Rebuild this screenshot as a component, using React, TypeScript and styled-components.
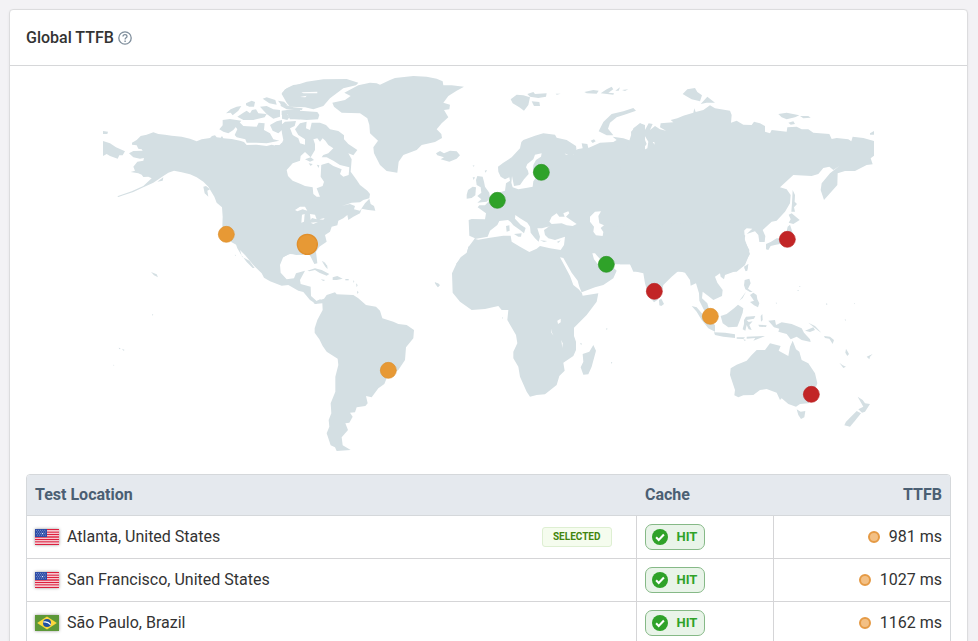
import React from "react";
import styled, { createGlobalStyle } from "styled-components";

const GlobalStyle = createGlobalStyle`
  *, *::before, *::after { box-sizing: border-box; }
  body {
    margin: 0;
    background: #f3f2f5;
    color: #333;
    font-family: Roboto, "Liberation Sans", sans-serif;
    font-size: 16px;
    line-height: 24px;
  }
`;

const Page = styled.main`
  padding: 9px 10px 0 9px;
`;

const Card = styled.section`
  background: #fff;
  border: 1px solid #dcdcde;
  border-radius: 4px;
  box-shadow: 0 1px 3px rgba(0, 0, 0, 0.06);
`;

const CardHeader = styled.header`
  display: flex;
  align-items: center;
  gap: 4px;
  padding: 16px 16px 15px;
  border-bottom: 1px solid #d6d7d9;
`;

const Title = styled.h2`
  margin: 0;
  font-size: 16px;
  font-weight: 500;
`;

const HelpButton = styled.button`
  display: flex;
  padding: 0;
  border: 0;
  background: none;
  color: #7f8e9c;
`;

const CardBody = styled.div`
  padding: 0 16px;
`;

const MapSvg = styled.svg`
  display: block;
  width: 100%;
  height: auto;
  margin-bottom: 8px;
`;

const Frame = styled.div`
  border: 1px solid #d5d8db;
  border-radius: 4px;
  overflow: hidden;
`;

const Table = styled.table`
  width: 100%;
  border-collapse: collapse;
  table-layout: fixed;
`;

const HeadCell = styled.th<{ $width?: string; $end?: boolean }>`
  width: ${(p) => p.$width ?? "auto"};
  height: 40px;
  padding: ${(p) => (p.$end ? "0 8px" : "0 8px 0 9px")};
  background: #e5e9ee;
  color: #4b5f73;
  font-weight: 700;
  text-align: ${(p) => (p.$end ? "right" : "left")};
  border-bottom: 1px solid #d5d8db;
  &:first-child { padding-left: 8px; }
`;

const Cell = styled.td`
  height: 43px;
  padding: 0 8px;
  border-bottom: 1px solid #d5d5d7;
  & + & { border-left: 1px solid #d5d5d7; }
`;

const Line = styled.div<{ $end?: boolean; $gap: number }>`
  display: flex;
  align-items: center;
  justify-content: ${(p) => (p.$end ? "flex-end" : "flex-start")};
  gap: ${(p) => p.$gap}px;
`;

const FlagSvg = styled.svg`
  flex: none;
  box-shadow: 0 0 3px rgba(0, 0, 0, 0.4);
`;

const SelectedTag = styled.span`
  margin-left: auto;
  margin-right: 16px;
  padding: 0 10px;
  border: 1px solid #deefd2;
  border-radius: 3px;
  background: #f5fcee;
  color: #42850f;
  font-size: 10px;
  font-weight: 700;
  line-height: 18px;
`;

const HitBadge = styled.span`
  display: inline-flex;
  align-items: center;
  gap: 9px;
  height: 26px;
  padding: 0 7px 0 6px;
  border: 1px solid #86b987;
  border-radius: 7px;
  background: #e9f4e9;
  color: #2fa229;
  font-size: 13px;
  font-weight: 700;
  vertical-align: middle;
`;

const Dot = styled.span`
  width: 12px;
  height: 12px;
  border: 2px solid #e59a45;
  border-radius: 50%;
  background: #f3c085;
`;

type Sheet = { x: number; y: number; land: string[]; water?: string[]; islets?: string[] };

/* Coastlines, grouped by region; each region has its own origin. */
const sheets: Sheet[] = [
  {
    x: 300, y: 210,
    land: [
      "96,218 110,210 122,198 140,194 160,187 175,192 195,194 215,197 245,200 270,206 290,214 305,208 330,204 336,198 345,196 350,202 362,203 366,198 370,205 395,207 420,212 432,216 440,225 470,224 500,228 515,224 535,229 545,218 552,228 552,540 410,525 395,517 375,500 367,470 368,440 366,412 350,398 343,380 325,350 310,335 290,322 270,313 245,307 222,302 205,308 190,318 160,338 130,352 100,366 70,376 55,381 52,379 95,364 130,348 155,325 145,320 130,321 125,314 115,310 92,306 105,302 100,290 112,275 130,272 132,264 120,266 100,262 87,250 100,243 128,242 125,238 115,236 110,226 96,224",
      "9,213 30,220 48,232 75,244 68,256 58,256 53,266 30,258 20,252 9,258",
      "9,183 24,185 22,192 9,192",
      "358,178 368,166 368,150 390,147 424,152 410,168 400,180 385,190 370,185",
      "404,195 412,178 405,168 418,156 430,168 470,170 476,158 494,160 492,180 510,190 520,208 538,212 500,220 470,218 440,218 436,208 410,202",
      "378,130 392,118 410,110 424,108 415,122 398,136 392,128",
      "412,140 430,128 440,122 450,130 456,120 468,118 475,130 500,132 494,142 460,150 430,150",
      "438,100 455,92 465,96 462,110 448,110 438,106",
      "488,86 500,82 526,90 530,104 508,100",
      "480,110 500,108 520,118 540,120 540,140 520,146 500,132",
      "510,165 530,154 546,150 546,180 535,190 518,182",
      "534,92 552,95 562,105 545,106",
      "545,70 560,55 580,45 605,42 605,98 580,100 560,90",
      "545,122 600,115 600,148 570,148 562,132 545,135",
      "330,358 322,362 325,380 314,370 310,350 318,348",
      "172,335 190,322 188,332",
    ],
  },
  {
    x: 840, y: 210,
    land: [
      "3,225 10,210 6,190 3,165 15,155 48,153 44,168 30,175 38,195 55,205 60,220 75,224 75,208 55,195 45,178 60,160 80,155 78,175 90,180 95,158 120,158 138,165 150,178 175,183 192,196 192,208 205,222 232,240 220,256 205,250 215,268 212,305 230,330 240,345 262,362 270,372 268,385 250,390 240,397 215,398 195,405 185,408 210,402 225,408 222,418 240,422 255,400 268,386 272,402 282,408 286,422 265,420 245,416 240,430 220,440 205,450 202,435 190,445 175,452 172,466 155,470 150,485 135,495 140,515 118,530 108,545 112,580 103,582 92,560 85,550 50,555 30,550 5,565 -15,570 -15,225",
      "40,48 80,35 130,28 200,27 235,38 228,46 190,55 150,85 130,108 100,118 75,112 30,110 20,98 5,72 15,58",
      "35,125 60,122 112,126 118,135 114,148 80,150 35,146",
      "2,95 18,105 40,112 68,115 66,120 20,118 2,108",
      "6,132 20,130 28,142 22,150 6,146",
      "193,68 235,46 270,38 290,40 300,44 330,30 345,24 400,18 440,20 470,26 488,34 490,46 515,46 552,50 530,62 505,78 490,98 510,104 508,118 492,120 505,142 485,160 470,178 484,192 486,204 465,216 425,225 410,240 370,255 356,275 352,308 320,303 300,285 282,250 280,232 294,212 270,190 268,165 262,145 240,130 185,128 162,110 157,98 195,90 212,78",
      "468,250 480,243 492,250 510,242 530,244 540,256 530,266 508,275 482,268 492,262 472,256",
      "125,572 140,586 143,598 136,590",
    ],
    water: [
      "20,300 38,280 60,272 62,258 75,246 92,262 105,240 105,222 100,208 112,205 120,215 128,205 136,212 145,225 160,235 145,250 130,255 125,262 123,300 122,320 132,335 128,348 110,355 120,380 110,380 100,372 98,352 75,348 62,342 38,332 24,318",
      "123,262 140,262 160,272 180,285 208,292 206,315 190,320 180,312 185,298 160,288 145,278 123,285",
      "45,420 60,410 75,410 82,422 68,418 52,424",
      "66,434 74,432 72,455 64,458",
      "90,432 105,434 110,448 96,444 92,450",
      "92,458 114,456 100,462", "118,448 134,444 130,449",
      "64,67 112,65 112,70 70,70", "60,81 80,77 76,82",
    ],
    islets: ["75,268 92,262 102,270 90,275", "86,280 98,282 92,288", "110,284 118,286 116,294"],
  },
  {
    x: 660, y: 690,
    land: [
      "45,-30 250,-30 250,75 210,72 190,80 180,105 182,128 200,148 222,145 228,130 255,122 240,150 242,162 272,170 273,198 290,213 312,206 318,215 300,213 288,222 270,210 250,186 235,182 205,165 185,167 150,154 132,143 125,130 100,105 75,75 60,60 66,80 88,92 104,114 98,114 80,96 62,72 52,55 45,35",
      "262,122 285,115 305,120 328,132 320,137 298,128 285,120 268,124",
      "338,142 352,138 368,146 350,150 338,150", "302,148 316,150 310,153", "376,147 386,147 386,151 376,151",
      "306,92 315,98 325,115 318,108",
      "400,150 403,155 400,158", "408,160 413,165 410,172", "412,182 416,187 411,192", "44,74 48,75 46,78",
    ],
  },
  {
    x: 870, y: 780,
    land: [
      "70,128 90,118 98,122 110,105 135,97 140,103 190,105 205,115 228,135 258,140 270,152 277,175 310,185 325,192 350,195 372,210 370,235 348,262 345,300 325,330 290,355 283,372 265,385 245,412 228,408 233,430 226,438 200,442 195,457 180,458 188,470 178,488 166,490 174,510 155,532 158,556 182,570 140,573 135,562 122,556 110,520 118,500 116,480 124,460 122,430 136,395 136,350 145,315 143,296 110,275 98,258 88,238 74,218 74,205 82,180 98,150 97,130 75,132",
      "435,68 446,72 450,76 443,82",
    ],
  },
  {
    x: 1320, y: 210,
    land: [
      "175,305 174,290 190,278 215,262 240,235 244,216 250,210 285,197 310,190 345,194 350,203 380,210 408,228 410,242 396,258 372,250 365,242 378,254 400,254 412,238 428,235 425,220 442,222 445,234 480,218 520,216 530,210 518,200 550,205 572,212 585,218 575,205 573,185 600,160 615,165 615,583 48,583 62,562 80,548 86,530 105,505 88,497 86,450 95,447 135,448 138,430 113,412 118,406 135,406 145,395 152,385 170,370 195,362 198,340 210,332 208,322 195,328 182,320",
      "80,375 84,360 98,350 108,352 106,376 95,384 80,386",
      "108,330 112,318 128,320 132,335 135,350 148,368 150,385 140,395 112,398 124,388 112,378 124,368 122,352 110,345",
      "134,302 141,300 137,308", "98,286 104,287 100,290", "98,322 105,322 101,330",
      "212,88 230,74 250,76 270,82 265,105 252,122 238,112 218,100",
      "262,72 280,66 285,72 320,70 318,80 295,84 270,80", "275,94 298,96 300,108 282,108", "347,71 362,71 350,74",
      "433,66 460,60 476,62 470,71 440,70", "482,70 500,58 515,50 520,58 505,68 522,70 520,74", "526,62 540,52 536,62", "546,60 565,58 555,63",
      "476,184 490,156 515,132 550,124 580,114 588,122 560,132 530,142 510,158 504,176 520,196 500,196",
      "452,212 462,208 467,214 458,219",
    ],
    water: [
      "216,318 222,348 240,345 252,328 266,312 264,302 258,292 262,282 280,268 285,254 305,250 303,260 288,270 280,285 279,298 300,308 320,314 290,320 280,334 278,350 262,353 235,358 218,352 214,338",
      "105,507 143,500 150,482 172,465 178,453 204,450 212,456 220,466 240,480 252,490 257,474 242,464 225,446 226,435 240,445 262,458 270,470 272,488 285,505 296,515 300,500 292,475 306,475 330,468 312,480 315,495 325,505 345,510 375,500 372,525 362,540 330,535 300,528 290,536 268,546 240,530 215,515 212,497 190,497 150,503 115,509",
      "328,455 335,440 350,430 358,440 374,440 370,430 385,424 388,430 378,440 400,455 410,462 398,468 380,466 365,460 335,462",
      "450,440 465,425 483,424 475,438 478,460 492,466 482,474 490,486 488,498 468,496 460,485 462,470 450,455",
    ],
    islets: ["198,468 208,466 209,482 200,485", "222,492 245,490 243,500 235,500", "300,511 322,513 312,516", "350,516 362,511 356,518", "320,470 330,469 325,473"],
  },
  {
    x: 1800, y: 210,
    land: [
      "95,190 100,175 120,160 130,165 128,185 133,205 140,222 125,243 142,235 145,215 133,195 135,180 146,160 158,162 150,180 165,168 180,178 198,182 180,172 182,160 220,157 212,150 232,145 250,137 280,128 283,115 287,126 310,120 330,106 345,115 390,122 395,135 393,158 410,152 430,164 455,165 462,155 480,160 495,168 495,185 510,190 515,180 560,185 562,172 590,170 605,178 625,178 640,188 688,192 695,207 710,204 745,208 754,214 758,200 790,204 822,213 822,257 812,265 818,283 800,285 765,303 735,303 713,310 712,345 690,370 672,390 662,360 665,340 690,310 718,288 700,300 688,290 670,294 655,312 635,318 580,315 540,352 560,358 572,375 570,400 555,425 530,452 515,455 488,480 496,498 494,516 478,516 475,495 465,484 440,492 457,476 440,475 425,488 436,497 432,510 448,540 445,560 435,585 410,605 100,605 90,583 60,583 60,300",
      "810,190 822,183 822,194 810,194",
      "535,132 560,128 598,136 585,142 560,148 545,142", "600,138 625,138 632,143 610,145", "565,158 580,154 585,162 572,164",
      "248,72 262,58 285,54 292,66 306,76 300,94 275,88 258,78", "302,102 322,80 345,98 320,98",
      "578,360 585,375 584,395 591,402 582,412 585,425 574,425 576,400",
      "566,434 575,430 599,450 580,462 566,458 572,448", "563,470 570,464 578,488 575,510 560,518 528,524 512,528 505,540 498,538 498,522 512,516 530,505 555,505",
      "432,590 445,582 442,598 436,602",
    ],
    water: ["158,216 163,216 164,224"],
  },
  {
    x: 1290, y: 690,
    land: [
      "115,50 125,45 135,25 160,22 200,16 240,15 245,38 270,52 298,65 308,48 330,55 390,58 400,30 400,0 540,0 600,60 600,102 560,102 530,95 508,85 495,70 487,70 492,88 508,108 530,118 545,108 560,122 550,145 520,165 495,172 455,187 458,197 505,190 500,215 470,255 432,293 432,318 438,335 438,360 430,378 400,398 404,422 388,438 380,465 345,493 320,495 300,500 290,485 270,440 265,410 250,385 250,365 262,340 258,315 232,270 235,240 215,240 205,228 165,237 125,240 90,215 68,188 66,130 80,100 110,72",
      "458,372 478,365 490,345 498,362 485,410 475,433 460,434 452,412 460,395",
      "14,156 28,162 26,170 18,165",
      "450,340 455,340 454,346", "528,295 533,296 530,300", "216,262 219,263 217,267", "543,396 547,397 544,402",
    ],
    water: ["390,82 400,84 412,105 425,128 443,152 448,170 456,190 446,178 430,165 420,138", "487,70 495,70 508,85 525,100 560,104 545,110 530,118 508,108 492,88", "382,272 392,266 392,277 384,282", "363,296 366,308 371,317 364,308", "394,330 398,340 397,354"],
  },
  {
    x: 1800, y: 720,
    land: [
      "30,-40 430,-60 435,0 450,42 430,75 410,92 375,105 372,118 362,110 360,100 345,110 352,128 368,150 366,168 340,180 325,168 308,155 306,175 322,190 332,225 312,210 298,182 297,160 288,130 272,137 270,120 255,98 235,93 215,110 190,135 185,155 172,180 162,187 145,165 135,130 130,100 110,95 90,72 30,72",
      "177,180 184,176 192,192 184,198 178,196",
      "275,198 290,202 310,225 345,255 345,275 325,265 305,240 290,215",
      "342,277 375,278 405,283 405,294 370,290 345,285",
      "362,228 380,222 402,205 414,194 430,205 428,218 420,240 412,260 385,262 368,250",
      "410,292 435,292 430,297 410,296", "440,290 495,288 460,302 466,294 440,296", "430,298 438,300 434,303",
      "432,240 438,230 466,228 462,236 440,240 446,246 458,244 448,255 455,270 446,268 440,255 436,272 428,268 432,252",
      "482,228 487,222 488,240 483,245", "475,254 500,256 498,261 478,260",
      "505,242 525,240 528,255 545,247 575,252 605,265 612,278 630,298 632,306 605,300 590,290 572,298 560,282 535,275 538,266 522,262",
      "615,272 640,262 645,270 630,276", "625,248 645,258 664,278 655,272", "672,288 690,290 702,300 698,312 688,296 675,294",
      "434,120 448,116 452,130 444,146 458,156 450,156 436,148 432,136", "450,165 460,158 470,165 472,178 478,190 474,202 462,196 450,186 462,182", "418,182 438,155 428,174",
      "434,85 445,72 442,92 437,94",
      "392,385 410,374 440,362 455,345 470,330 495,330 510,310 542,318 536,332 565,348 570,320 578,302 588,328 598,335 605,360 625,370 645,400 652,430 640,465 625,490 600,492 588,500 565,492 545,475 540,480 530,458 500,447 480,450 460,465 430,466 415,472 403,466 405,450 390,405",
      "590,508 602,515 616,513 613,532 603,537 595,525",
      "773,470 788,480 795,490 810,492 795,515 786,518 775,508 790,500", "770,513 783,520 765,542 750,560 733,556 738,545",
      "738,326 747,342 742,348 736,338", "718,368 728,376 738,380 730,384", "800,350 818,342 810,350 808,358",
      "592,150 597,150 594,154", "597,138 602,138 599,141", "678,190 683,192 679,195", "527,188 531,188 529,192", "734,238 738,239 736,243", "762,189 765,190 763,193",
    ],
  },
];

const remoteIslets = ["453,816 470,823 474,832 462,826", "456,942 460,944 457,947", "356,1043 362,1045 358,1048", "366,1046 374,1050 370,1052", "340,1094 343,1095 341,1098"];

const markers = [
  { name: "San Francisco", x: 226, y: 234, color: "#e79935", edge: "#dd8e29" },
  { name: "São Paulo", x: 388, y: 370, color: "#e79935", edge: "#dd8e29" },
  { name: "Singapore", x: 710, y: 316, color: "#e79935", edge: "#dd8e29" },
  { name: "Frankfurt", x: 497, y: 200, color: "#2fa229", edge: "#299223" },
  { name: "Helsinki", x: 541, y: 172, color: "#2fa229", edge: "#299223" },
  { name: "Dubai", x: 606, y: 264, color: "#2fa229", edge: "#299223" },
  { name: "Mumbai", x: 654, y: 291, color: "#c22526", edge: "#b82020" },
  { name: "Tokyo", x: 787, y: 239, color: "#c22526", edge: "#b82020" },
  { name: "Sydney", x: 811, y: 394, color: "#c22526", edge: "#b82020" },
  { name: "Atlanta", x: 307, y: 244, color: "#e79935", edge: "#e08f2c", selected: true },
];

const WorldMap = () => (
  <MapSvg viewBox="78 198 2775 1200" role="img" aria-label="World map of TTFB by test location">
    {(["land", "water", "islets"] as const).map((layer) => (
      <g key={layer} fill={layer === "water" ? "#fff" : "#d4dfe3"}>
        {sheets.map((s) => (
          <g key={`${s.x}-${s.y}`} transform={`translate(${s.x} ${s.y})`}>
            {(s[layer] ?? []).map((points) => <polygon key={points} points={points} />)}
          </g>
        ))}
      </g>
    ))}
    <g fill="#d4dfe3">{remoteIslets.map((p) => <polygon key={p} points={p} />)}</g>
    {markers.map((m) => (
      <circle
        key={m.name}
        cx={m.x * 3 + 1}
        cy={m.y * 3 + 1}
        r={m.selected ? 30 : 24}
        fill={m.color}
        stroke={m.edge}
        strokeWidth={m.selected ? 4 : 2}
      />
    ))}
  </MapSvg>
);

const UsFlag = () => (
  <FlagSvg width="24" height="16" viewBox="0 0 24 16" aria-hidden="true">
    <path fill="#fff" d="M0 0h24v16H0z" />
    <path stroke="#dc1f3e" strokeWidth="1.4" d="M0 .6h24M0 3.1h24M0 5.5h24M0 8h24M0 10.5h24M0 12.9h24M0 15.4h24" />
    <path fill="#2e4da7" d="M0 0h12v8H0z" />
    <path stroke="#9fb2de" strokeWidth=".8" strokeDasharray=".8 1.3" d="M1 1.4h10M2 3h9M1 4.6h10M2 6.2h9" />
    <circle cx="7.5" cy="4.6" r=".7" fill="#fff" />
  </FlagSvg>
);

const BrazilFlag = () => (
  <FlagSvg width="24" height="16" viewBox="0 0 24 16" aria-hidden="true">
    <path fill="#5d9838" d="M0 0h24v16H0z" />
    <path fill="#fdd73d" d="m12 1.5 9.8 6.5-9.8 6.5L2.2 8z" />
    <circle cx="12" cy="8" r="4" fill="#2150a0" />
    <path fill="none" stroke="#fff" strokeWidth="1.2" d="M8.3 7c3-.6 5.5.3 7.3 2.6" />
  </FlagSvg>
);

const CheckIcon = () => (
  <svg width="16" height="16" viewBox="0 0 16 16" aria-hidden="true">
    <circle cx="8" cy="8" r="8" fill="#2fa229" />
    <path d="m4.1 8.3 2.6 2.6 5.2-5.3" fill="none" stroke="#fff" strokeWidth="2.1" />
  </svg>
);

const HelpIcon = () => (
  <svg width="14" height="14" viewBox="0 0 14 14" fill="none" stroke="currentColor" aria-hidden="true">
    <circle cx="7" cy="7" r="6.2" strokeWidth="1.3" />
    <path d="M5 5.6c0-1.2.9-2 2-2s2 .8 2 1.8c0 1.400-1.900 1.500-1.900 3" strokeWidth="1.3" />
    <path d="M7.1 9.6v1.3" strokeWidth="1.4" />
  </svg>
);

const rows = [
  { place: "Atlanta, United States", flag: <UsFlag />, ttfb: "981 ms", selected: true },
  { place: "San Francisco, United States", flag: <UsFlag />, ttfb: "1027 ms", selected: false },
  { place: "São Paulo, Brazil", flag: <BrazilFlag />, ttfb: "1162 ms", selected: false },
];

export default function App() {
  return (
    <>
      <GlobalStyle />
      <Page>
        <Card>
          <CardHeader>
            <Title>Global TTFB</Title>
            <HelpButton type="button" aria-label="About Global TTFB"><HelpIcon /></HelpButton>
          </CardHeader>
          <CardBody>
            <WorldMap />
            <Frame>
              <Table>
                <thead>
                  <tr>
                    <HeadCell scope="col">Test Location</HeadCell>
                    <HeadCell scope="col" $width="137px">Cache</HeadCell>
                    <HeadCell scope="col" $width="177px" $end>TTFB</HeadCell>
                  </tr>
                </thead>
                <tbody>
                  {rows.map((row) => (
                    <tr key={row.place}>
                      <Cell>
                        <Line $gap={8}>
                          {row.flag}
                          <span>{row.place}</span>
                          {row.selected && <SelectedTag>SELECTED</SelectedTag>}
                        </Line>
                      </Cell>
                      <Cell>
                        <Line $gap={0}><HitBadge><CheckIcon />HIT</HitBadge></Line>
                      </Cell>
                      <Cell>
                        <Line $gap={9} $end><Dot /><span>{row.ttfb}</span></Line>
                      </Cell>
                    </tr>
                  ))}
                </tbody>
              </Table>
            </Frame>
          </CardBody>
        </Card>
      </Page>
    </>
  );
}
